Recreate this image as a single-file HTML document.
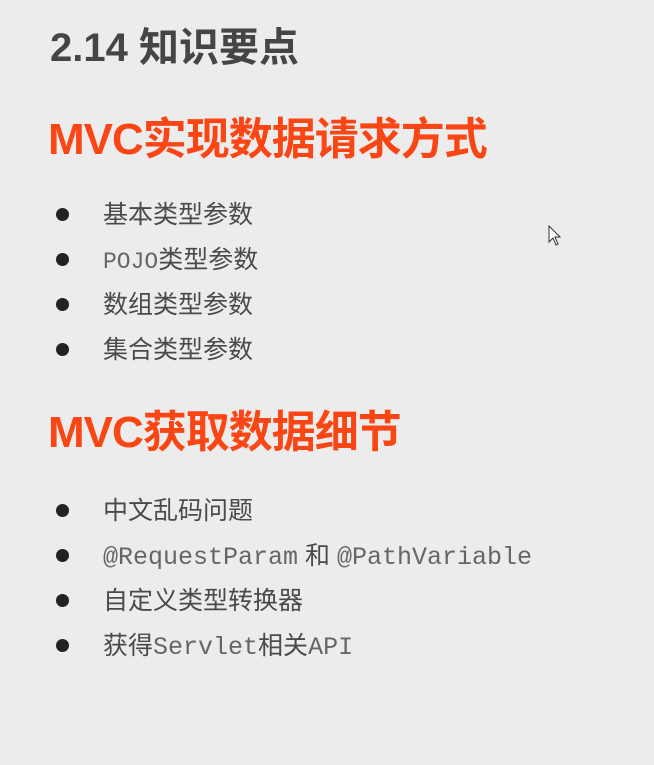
<!DOCTYPE html>
<html><head><meta charset="utf-8"><style>
body{margin:0;width:654px;height:765px;background:#ececec;overflow:hidden;position:relative;font-family:"Liberation Sans","Noto Sans CJK SC",sans-serif}
.t{position:absolute;white-space:nowrap;line-height:1}
.h1{left:50px;top:28px;font-size:40px;font-weight:bold;color:#454545}
.h2{left:48px;font-size:44px;font-weight:bold;color:#fa4614;letter-spacing:-1px}
.li{left:103px;font-size:25px;color:#4a4a4a}
.m{font-family:"Liberation Mono",monospace;color:#666;font-size:25px}
.d{position:absolute;left:56px;width:13px;height:13px;border-radius:50%;background:#222}
</style></head><body>
<div class="t h1">2.14 知识要点</div>
<div class="t h2" style="top:118px">MVC实现数据请求方式</div>
<div class="d" style="top:208px"></div><div class="t li" style="top:203px">基本类型参数</div>
<div class="d" style="top:253px"></div><div class="t li" style="top:248px"><span class="m" style="font-size:23px">POJO</span>类型参数</div>
<div class="d" style="top:298px"></div><div class="t li" style="top:293px">数组类型参数</div>
<div class="d" style="top:343px"></div><div class="t li" style="top:338px">集合类型参数</div>
<div class="t h2" style="top:411px">MVC获取数据细节</div>
<div class="d" style="top:504px"></div><div class="t li" style="top:499px">中文乱码问题</div>
<div class="d" style="top:549px"></div><div class="t li" style="top:544px"><span class="m">@RequestParam</span> 和 <span class="m">@PathVariable</span></div>
<div class="d" style="top:594px"></div><div class="t li" style="top:589px">自定义类型转换器</div>
<div class="d" style="top:639px"></div><div class="t li" style="top:634px">获得<span class="m">Servlet</span>相关<span class="m">API</span></div>
<svg style="position:absolute;left:548px;top:225px" width="14" height="22" viewBox="0 0 14 22"><path d="M1 1 L1 17 L5 13 L8 20 L10 19 L7 12 L12 12 Z" fill="#fff" stroke="#333" stroke-width="1"/></svg>
</body></html>
